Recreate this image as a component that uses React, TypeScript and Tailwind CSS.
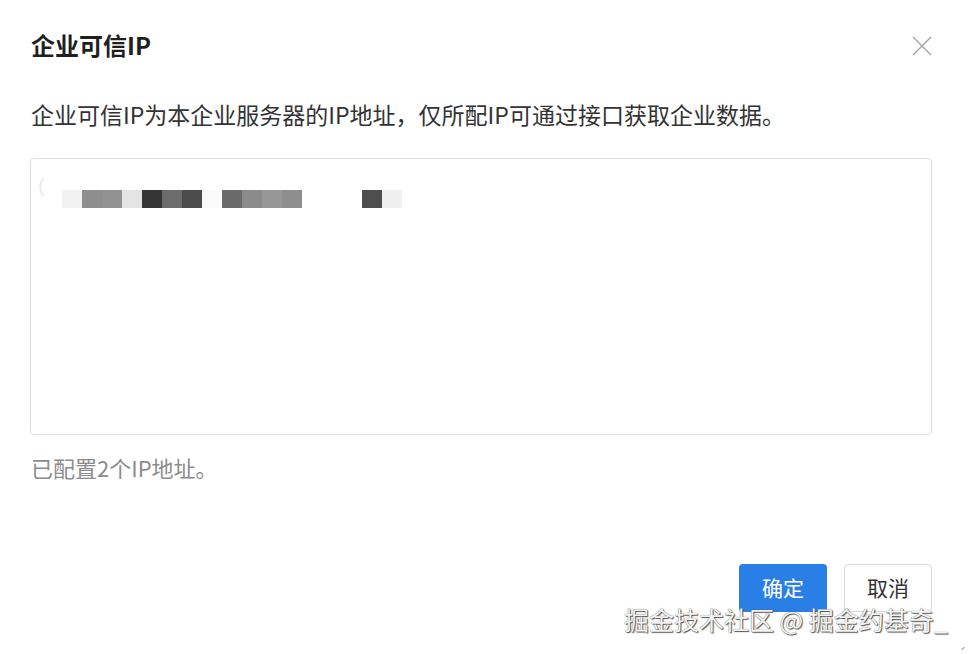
const blocks = [
  { w: 20, c: 'bg-[#f2f2f2]' },
  { w: 20, c: 'bg-[#8e8e8e]' },
  { w: 20, c: 'bg-[#929292]' },
  { w: 20, c: 'bg-[#e4e4e4]' },
  { w: 20, c: 'bg-[#353535]' },
  { w: 20, c: 'bg-[#6c6c6c]' },
  { w: 20, c: 'bg-[#4b4b4b]' },
  { w: 20, c: 'bg-[#fbfbfb]' },
  { w: 20, c: 'bg-[#6a6a6a]' },
  { w: 20, c: 'bg-[#8b8b8b]' },
  { w: 20, c: 'bg-[#979797]' },
  { w: 20, c: 'bg-[#8e8e8e]' },
  { w: 60, c: 'bg-transparent' },
  { w: 20, c: 'bg-[#4e4e4e]' },
  { w: 20, c: 'bg-[#efefef]' },
]

export default function App() {
  return (
    <div className="relative w-[968px] h-[654px] overflow-hidden bg-white font-['Noto_Sans_CJK_SC','Noto_Sans',sans-serif]">
      {/* Header */}
      <div className="flex items-center justify-between pl-[31px] pr-[36px] pt-[29px]">
        <h1 className="text-[24px] leading-[32px] font-bold text-[#1f1f1f]">企业可信IP</h1>
        <svg className="w-[20px] h-[20px] mt-[2px]" viewBox="0 0 20 20" fill="none" stroke="#a3a3a3" strokeWidth="1.4">
          <path d="M1 1L19 19M19 1L1 19" />
        </svg>
      </div>

      {/* Body */}
      <div className="pl-[30px] pr-[36px]">
        <p className="mt-[38px] pl-px text-[23px] leading-[30px] text-[#333]">
          企业可信IP为本企业服务器的IP地址，仅所配IP可通过接口获取企业数据。
        </p>

        <div className="relative mt-[29px] h-[277px] rounded-[4px] border border-[#dcdcdc] pl-[31px] pt-[31px]">
          <svg className="absolute left-[5px] top-[18px] w-[10px] h-[20px]" viewBox="0 0 10 20" fill="none" stroke="#ececec" strokeWidth="2">
            <path d="M8 1C3 5 3 15 8 19" />
          </svg>
          <div className="flex">
            {blocks.map((b, i) => (
              <div key={i} className={`h-[18px] ${b.c}`} style={{ width: b.w }} />
            ))}
          </div>
        </div>

        <p className="mt-[17px] pl-px text-[22px] leading-[30px] text-[#8c8c8c]">已配置2个IP地址。</p>
      </div>

      {/* Footer */}
      <div className="flex justify-end gap-[17px] pr-[36px] mt-[82px]">
        <button className="w-[88px] h-[48px] rounded-[4px] bg-[#2a7fe6] text-white text-[21px]">确定</button>
        <button className="w-[88px] h-[48px] rounded-[4px] border border-[#d9d9d9] bg-white text-[#333] text-[21px]">取消</button>
      </div>

      {/* Watermark */}
      <div className="absolute left-[624px] top-[602px] text-[25px] leading-[34px] text-[#f4f4f4] [text-shadow:0_0_1px_#444,1px_1px_1px_#555]">
        掘金技术社区 @ 掘金约基奇_
      </div>
      <div className="absolute right-[3px] bottom-[5px] w-[4px] h-px bg-[#999] rotate-[-45deg]" />
    </div>
  )
}
